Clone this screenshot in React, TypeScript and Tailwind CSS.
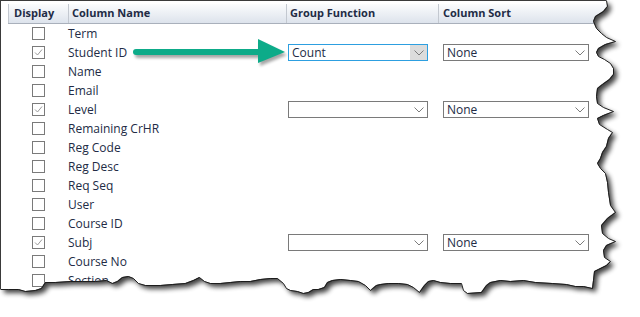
import React from "react";

type Row = {
  name: string;
  checked?: boolean;
  group?: string;
  sort?: string;
  active?: boolean;
};

const rows: Row[] = [
  { name: "Term" },
  { name: "Student ID", checked: true, group: "Count", sort: "None", active: true },
  { name: "Name" },
  { name: "Email" },
  { name: "Level", checked: true, group: "", sort: "None" },
  { name: "Remaining CrHR" },
  { name: "Reg Code" },
  { name: "Reg Desc" },
  { name: "Req Seq" },
  { name: "User" },
  { name: "Course ID" },
  { name: "Subj", checked: true, group: "", sort: "None" },
  { name: "Course No" },
  { name: "Section" },
];

// torn paper edge: right side top -> bottom, then bottom side right -> left
const edge: [number, number][] = [
  [606, 0], [607, 6], [603, 11], [595, 16], [593, 21], [596, 28], [601, 33], [606, 37], [615, 41],
  [605, 44], [598, 48], [596, 52], [598, 56], [604, 59], [610, 63], [613, 68], [613, 74], [609, 79],
  [602, 84], [597, 88], [596, 96], [597, 103], [603, 107], [613, 111], [603, 115], [597, 118],
  [599, 124], [607, 129], [612, 132], [608, 138], [606, 146], [602, 152], [600, 158], [597, 163],
  [600, 168], [605, 173], [607, 182], [608, 192], [610, 205], [615, 212], [607, 218], [601, 225],
  [602, 233], [608, 238], [615, 241], [606, 245], [603, 250], [604, 257], [610, 261], [606, 265],
  [598, 269], [594, 271], [593, 280], [592, 288],
  [583, 286], [575, 286], [566, 284], [552, 283], [535, 282], [523, 280], [510, 281], [500, 280],
  [490, 282], [486, 285], [481, 292], [467, 293], [463, 290], [461, 283], [450, 283], [440, 282],
  [433, 280], [428, 281], [424, 285], [419, 292], [413, 287], [407, 284], [398, 283], [388, 283],
  [380, 284], [376, 285], [370, 290], [365, 285], [358, 281], [350, 280], [340, 279], [332, 280],
  [327, 282], [324, 287], [318, 289], [313, 289], [308, 292], [303, 293], [297, 291], [290, 290],
  [286, 288], [283, 283], [277, 278], [270, 278], [260, 279], [250, 281], [240, 281], [230, 282],
  [220, 283], [210, 283], [204, 281], [199, 277], [193, 280], [185, 283], [172, 284], [160, 285],
  [145, 285], [138, 283], [133, 278], [128, 276], [122, 277], [117, 281], [112, 283], [106, 280],
  [95, 281], [82, 281], [70, 281], [55, 282], [45, 282], [41, 288], [35, 290], [25, 291], [18, 289],
  [8, 289], [0, 289],
];

const edgeLine = edge.map(([x, y]) => `${x + 0.5},${y + 0.5}`).join(" ");
const paperShape = "M0 0 L" + edge.map(([x, y]) => `${x} ${y}`).join(" L") + " Z";
const outside = "M-20 -20 H660 V340 H-20 Z " + paperShape;

function Checkbox({ checked }: { checked?: boolean }) {
  return (
    <div className="w-[13px] h-[13px] border border-[#7a7a7a] bg-white">
      {checked && (
        <svg width="11" height="11" viewBox="0 0 11 11">
          <polyline points="2,5.5 4.5,8 9,2.5" fill="none" stroke="#9a9a9a" strokeWidth="1" />
        </svg>
      )}
    </div>
  );
}

function Dropdown({ value, active, width }: { value: string; active?: boolean; width: string }) {
  return (
    <div
      className={`${width} h-[17px] flex items-center border bg-white ${
        active ? "border-[#2d9fe0]" : "border-[#7a7a7a]"
      }`}
    >
      <span className="flex-1 pl-[3px] leading-[15px]">{value}</span>
      <div className={`w-[17px] h-full flex items-center justify-center ${active ? "bg-[#dcdcdc]" : ""}`}>
        <svg width="10" height="6" viewBox="0 0 10 6">
          <polyline points="0.5,0.5 5,5 9.5,0.5" fill="none" stroke="#7c7c7c" strokeWidth="1" />
        </svg>
      </div>
    </div>
  );
}

export default function App() {
  return (
    <div
      className="relative w-[640px] h-[317px] bg-white overflow-hidden text-[#222b45]"
      style={{ fontFamily: '"Open Sans", "Liberation Sans", sans-serif' }}
    >
      {/* le tableau */}
      <div className="h-full border-l border-t border-[#3a3a3a] pl-[7px] pt-[3px]">
        <div className="flex h-[20px] border-b border-[#a9b0bb] bg-linear-to-b from-[#fbfcfd] to-[#dde3ec] text-[11px] font-bold">
          <div className="w-[60px] border-l border-[#c3c8d0] pl-[5px] flex items-center">Display</div>
          <div className="w-[218px] border-l border-[#c3c8d0] pl-[3px] flex items-center">Column Name</div>
          <div className="w-[152px] border-l border-[#c3c8d0] pl-[3px] flex items-center">Group Function</div>
          <div className="flex-1 border-l border-[#c3c8d0] pl-[4px] flex items-center">Column Sort</div>
        </div>

        {rows.map((r) => (
          <div key={r.name} className="flex h-[19px] items-center text-[12px]">
            <div className="w-[60px] pl-[24px]">
              <Checkbox checked={r.checked} />
            </div>
            <div className="w-[218px] leading-[19px]">{r.name}</div>
            <div className="w-[152px] pl-[2px]">
              {r.group !== undefined && <Dropdown value={r.group} active={r.active} width="w-[140px]" />}
            </div>
            <div className="pl-[5px]">
              {r.sort !== undefined && <Dropdown value={r.sort} width="w-[146px]" />}
            </div>
          </div>
        ))}
      </div>

      {/* fleche verte */}
      <svg className="absolute left-[120px] top-[34px]" width="175" height="40" viewBox="0 0 175 40">
        <defs>
          <filter id="arrowShadow" x="-10%" y="-30%" width="130%" height="180%">
            <feGaussianBlur stdDeviation="1.5" />
          </filter>
        </defs>
        <g transform="translate(2,3)" fill="#000" opacity="0.35" filter="url(#arrowShadow)">
          <line x1="16" y1="18" x2="142" y2="18" stroke="#000" strokeWidth="6" strokeLinecap="round" />
          <polygon points="138,5 165,18 138,29" />
        </g>
        <line x1="16" y1="18" x2="142" y2="18" stroke="#0dab89" strokeWidth="6" strokeLinecap="round" />
        <polygon points="138,5 165,18 138,29" fill="#0dab89" />
      </svg>

      {/* bord déchiré */}
      <svg className="absolute inset-0 pointer-events-none" width="640" height="317" viewBox="0 0 640 317">
        <defs>
          <clipPath id="outsideClip">
            <path d={outside} clipRule="evenodd" />
          </clipPath>
          <filter id="tornShadow" x="-10%" y="-10%" width="120%" height="120%">
            <feGaussianBlur stdDeviation="2.5" />
          </filter>
        </defs>
        <path d={outside} fill="#fff" fillRule="evenodd" />
        <g clipPath="url(#outsideClip)">
          <path d={paperShape} transform="translate(4,4)" fill="#000" opacity="0.75" filter="url(#tornShadow)" />
        </g>
        <polyline points={edgeLine} fill="none" stroke="#1c1c1c" strokeWidth="1" />
      </svg>
    </div>
  );
}
